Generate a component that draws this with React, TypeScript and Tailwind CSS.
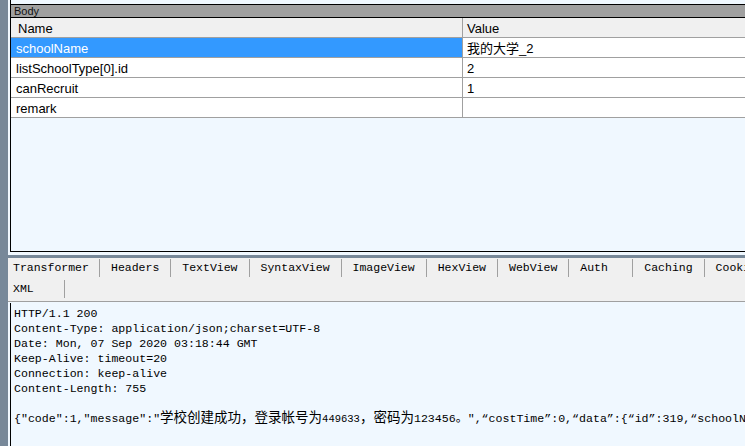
import React from 'react';

const mono = { fontFamily: '"Liberation Mono", "Noto Sans CJK SC", monospace' };

const rows = [
  { name: 'schoolName', value: '我的大学_2', selected: true },
  { name: 'listSchoolType[0].id', value: '2' },
  { name: 'canRecruit', value: '1' },
  { name: 'remark', value: '' },
];

const tabsTop = [
  { label: 'Transformer', first: true },
  { label: 'Headers' },
  { label: 'TextView' },
  { label: 'SyntaxView' },
  { label: 'ImageView' },
  { label: 'HexView' },
  { label: 'WebView' },
  { label: 'Auth' },
  { label: 'Caching' },
  { label: 'Cookies' },
];

const headerLines = [
  'HTTP/1.1 200',
  'Content-Type: application/json;charset=UTF-8',
  'Date: Mon, 07 Sep 2020 03:18:44 GMT',
  'Keep-Alive: timeout=20',
  'Connection: keep-alive',
  'Content-Length: 755',
];

function Tab({ label, first }: { label: string; first?: boolean }) {
  return (
    <div
      className={
        first
          ? 'h-[18px] mt-[1px] w-[92px] shrink-0 pl-[5px] flex items-center border-r border-[#a0a0a0] whitespace-nowrap'
          : 'h-[18px] mt-[1px] min-w-[64px] shrink-0 pl-[11px] pr-[11px] flex items-center border-r border-[#a0a0a0] whitespace-nowrap'
      }
    >
      {label}
    </div>
  );
}

export default function App() {
  return (
    <div
      className="w-[745px] h-[446px] overflow-hidden flex bg-[#f0f8ff] text-black"
      style={{ fontFamily: '"Liberation Sans", "Noto Sans CJK SC", sans-serif' }}
    >
      <div className="w-[8px] shrink-0 bg-[#778899]" />
      <div className="flex-1 min-w-0 flex flex-col">
        {/* tail of the panel above */}
        <div className="h-[5px] ml-[2px] border-l border-b border-black" />

        {/* Body panel */}
        <div className="h-[247px] ml-[2px] border-l border-b border-black flex flex-col">
          <div className="h-[13px] bg-[#a0a0a0] border-b border-black text-[11px] leading-[13px] pl-[3px] text-[#111]">
            Body
          </div>
          <div className="text-[13px]">
            <div className="flex h-[20px] bg-[#f0f0f0] border-b border-[#a0a0a0]">
              <div className="w-[452px] shrink-0 border-r border-[#a0a0a0] pl-[7px] pt-[2px] flex items-center">Name</div>
              <div className="flex-1 pl-[4px] pt-[2px] flex items-center">Value</div>
            </div>
            {rows.map((r) => (
              <div key={r.name} className="flex h-[20px] border-b border-[#a0a0a0] bg-white">
                <div
                  className={
                    r.selected
                      ? 'w-[452px] shrink-0 border-r border-[#a0a0a0] pl-[5px] pt-[2px] flex items-center bg-[#3399ff] text-white'
                      : 'w-[452px] shrink-0 border-r border-[#a0a0a0] pl-[5px] pt-[2px] flex items-center'
                  }
                >
                  {r.name}
                </div>
                <div className="flex-1 pl-[4px] pt-[2px] flex items-center whitespace-nowrap">{r.value}</div>
              </div>
            ))}
          </div>
        </div>

        <div className="h-[3px]" />
        <div className="h-[3px] bg-[#778899]" />

        {/* tab strip */}
        <div className="h-[44px] bg-[#f0f0f0] border-b border-[#a0a0a0] text-[11.5px]" style={mono}>
          <div className="flex h-[21px] overflow-hidden">
            {tabsTop.map((t) => (
              <Tab key={t.label} label={t.label} first={t.first} />
            ))}
          </div>
          <div className="flex h-[21px]">
            <div className="h-[18px] mt-[1px] w-[57px] pl-[5px] flex items-center border-r border-[#a0a0a0]">XML</div>
          </div>
        </div>

        {/* raw response */}
        <div className="flex-1 mt-[1px] ml-[2px] border-l border-black pl-[3px] pt-[3px] text-[11.6px] leading-[15px] whitespace-nowrap overflow-hidden" style={mono}>
          {headerLines.map((l) => (
            <div key={l}>{l}</div>
          ))}
          <div className="h-[15px]" />
          <div>
            {'{"code":1,"message":"'}
            <span className="text-[13.5px]">学校创建成功，登录帐号为</span>
            <span className="text-[10.5px]">449633</span>
            <span className="text-[13.5px]">，密码为</span>
            {'123456'}
            <span className="text-[12px]">。</span>
            {'",“costTime”:0,“data”:{“id”:319,“schoolName”'}
          </div>
        </div>
      </div>
    </div>
  );
}
